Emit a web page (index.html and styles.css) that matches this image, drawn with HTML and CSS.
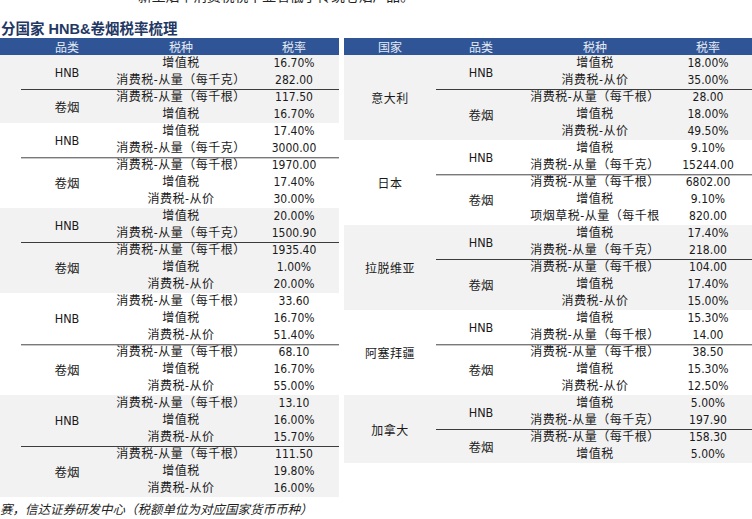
FILE: index.html
```html
<!DOCTYPE html>
<html lang="zh-CN">
<head>
<meta charset="utf-8">
<title>分国家 HNB&amp;卷烟税率梳理</title>
<link rel="stylesheet" href="styles.css">
</head>
<body>
<div class="lead">新型烟草消费税税率显著低于传统卷烟产品。</div>
<h1 class="title">分国家 HNB&amp;卷烟税率梳理</h1>
<div class="tables">
  <section class="tbl tbl-left">
    <div class="thead"><span></span><span>品类</span><span>税种</span><span>税率</span></div>

    <div class="grp shade">
      <div class="country"></div>
      <div class="subs">
        <div class="sub"><div class="cat">HNB</div><div class="rows">
          <div class="row"><span>增值税</span><span>16.70%</span></div>
          <div class="row"><span>消费税-从量（每千克）</span><span>282.00</span></div>
        </div></div>
        <div class="sub"><div class="cat">卷烟</div><div class="rows">
          <div class="row"><span>消费税-从量（每千根）</span><span>117.50</span></div>
          <div class="row"><span>增值税</span><span>16.70%</span></div>
        </div></div>
      </div>
    </div>

    <div class="grp">
      <div class="country"></div>
      <div class="subs">
        <div class="sub"><div class="cat">HNB</div><div class="rows">
          <div class="row"><span>增值税</span><span>17.40%</span></div>
          <div class="row"><span>消费税-从量（每千克）</span><span>3000.00</span></div>
        </div></div>
        <div class="sub"><div class="cat">卷烟</div><div class="rows">
          <div class="row"><span>消费税-从量（每千根）</span><span>1970.00</span></div>
          <div class="row"><span>增值税</span><span>17.40%</span></div>
          <div class="row"><span>消费税-从价</span><span>30.00%</span></div>
        </div></div>
      </div>
    </div>

    <div class="grp shade">
      <div class="country"></div>
      <div class="subs">
        <div class="sub"><div class="cat">HNB</div><div class="rows">
          <div class="row"><span>增值税</span><span>20.00%</span></div>
          <div class="row"><span>消费税-从量（每千克）</span><span>1500.90</span></div>
        </div></div>
        <div class="sub"><div class="cat">卷烟</div><div class="rows">
          <div class="row"><span>消费税-从量（每千根）</span><span>1935.40</span></div>
          <div class="row"><span>增值税</span><span>1.00%</span></div>
          <div class="row"><span>消费税-从价</span><span>20.00%</span></div>
        </div></div>
      </div>
    </div>

    <div class="grp">
      <div class="country"></div>
      <div class="subs">
        <div class="sub"><div class="cat">HNB</div><div class="rows">
          <div class="row"><span>消费税-从量（每千根）</span><span>33.60</span></div>
          <div class="row"><span>增值税</span><span>16.70%</span></div>
          <div class="row"><span>消费税-从价</span><span>51.40%</span></div>
        </div></div>
        <div class="sub"><div class="cat">卷烟</div><div class="rows">
          <div class="row"><span>消费税-从量（每千根）</span><span>68.10</span></div>
          <div class="row"><span>增值税</span><span>16.70%</span></div>
          <div class="row"><span>消费税-从价</span><span>55.00%</span></div>
        </div></div>
      </div>
    </div>

    <div class="grp shade">
      <div class="country"></div>
      <div class="subs">
        <div class="sub"><div class="cat">HNB</div><div class="rows">
          <div class="row"><span>消费税-从量（每千根）</span><span>13.10</span></div>
          <div class="row"><span>增值税</span><span>16.00%</span></div>
          <div class="row"><span>消费税-从价</span><span>15.70%</span></div>
        </div></div>
        <div class="sub"><div class="cat">卷烟</div><div class="rows">
          <div class="row"><span>消费税-从量（每千根）</span><span>111.50</span></div>
          <div class="row"><span>增值税</span><span>19.80%</span></div>
          <div class="row"><span>消费税-从价</span><span>16.00%</span></div>
        </div></div>
      </div>
    </div>
  </section>

  <section class="tbl tbl-right">
    <div class="thead"><span>国家</span><span>品类</span><span>税种</span><span>税率</span></div>

    <div class="grp shade">
      <div class="country">意大利</div>
      <div class="subs">
        <div class="sub"><div class="cat">HNB</div><div class="rows">
          <div class="row"><span>增值税</span><span>18.00%</span></div>
          <div class="row"><span>消费税-从价</span><span>35.00%</span></div>
        </div></div>
        <div class="sub"><div class="cat">卷烟</div><div class="rows">
          <div class="row"><span>消费税-从量（每千根）</span><span>28.00</span></div>
          <div class="row"><span>增值税</span><span>18.00%</span></div>
          <div class="row"><span>消费税-从价</span><span>49.50%</span></div>
        </div></div>
      </div>
    </div>

    <div class="grp">
      <div class="country">日本</div>
      <div class="subs">
        <div class="sub"><div class="cat">HNB</div><div class="rows">
          <div class="row"><span>增值税</span><span>9.10%</span></div>
          <div class="row"><span>消费税-从量（每千克）</span><span>15244.00</span></div>
        </div></div>
        <div class="sub"><div class="cat">卷烟</div><div class="rows">
          <div class="row"><span>消费税-从量（每千根）</span><span>6802.00</span></div>
          <div class="row"><span>增值税</span><span>9.10%</span></div>
          <div class="row"><span>项烟草税-从量（每千根</span><span>820.00</span></div>
        </div></div>
      </div>
    </div>

    <div class="grp shade">
      <div class="country">拉脱维亚</div>
      <div class="subs">
        <div class="sub"><div class="cat">HNB</div><div class="rows">
          <div class="row"><span>增值税</span><span>17.40%</span></div>
          <div class="row"><span>消费税-从量（每千克）</span><span>218.00</span></div>
        </div></div>
        <div class="sub"><div class="cat">卷烟</div><div class="rows">
          <div class="row"><span>消费税-从量（每千根）</span><span>104.00</span></div>
          <div class="row"><span>增值税</span><span>17.40%</span></div>
          <div class="row"><span>消费税-从价</span><span>15.00%</span></div>
        </div></div>
      </div>
    </div>

    <div class="grp">
      <div class="country">阿塞拜疆</div>
      <div class="subs">
        <div class="sub"><div class="cat">HNB</div><div class="rows">
          <div class="row"><span>增值税</span><span>15.30%</span></div>
          <div class="row"><span>消费税-从量（每千根）</span><span>14.00</span></div>
        </div></div>
        <div class="sub"><div class="cat">卷烟</div><div class="rows">
          <div class="row"><span>消费税-从量（每千根）</span><span>38.50</span></div>
          <div class="row"><span>增值税</span><span>15.30%</span></div>
          <div class="row"><span>消费税-从价</span><span>12.50%</span></div>
        </div></div>
      </div>
    </div>

    <div class="grp shade">
      <div class="country">加拿大</div>
      <div class="subs">
        <div class="sub"><div class="cat">HNB</div><div class="rows">
          <div class="row"><span>增值税</span><span>5.00%</span></div>
          <div class="row"><span>消费税-从量（每千克）</span><span>197.90</span></div>
        </div></div>
        <div class="sub"><div class="cat">卷烟</div><div class="rows">
          <div class="row"><span>消费税-从量（每千根）</span><span>158.30</span></div>
          <div class="row"><span>增值税</span><span>5.00%</span></div>
        </div></div>
      </div>
    </div>
  </section>
</div>
<p class="source">赛，信达证券研发中心（税额单位为对应国家货币币种）</p>
</body>
</html>
```

FILE: styles.css
```css
html, body {
  margin: 0;
  padding: 0;
  background: #ffffff;
}
body {
  width: 752px;
  overflow: hidden;
  font-family: "DejaVu Sans Condensed", "Liberation Sans", "Noto Sans CJK SC", sans-serif;
  color: #1a1a1a;
}
.lead {
  margin: -12px 0 0 0;
  padding-left: 138px;
  height: 15px;
  line-height: 15px;
  font-size: 13.8px;
  font-family: "Noto Sans CJK SC", sans-serif;
  color: #222;
  white-space: nowrap;
}
.title {
  margin: 17px 0 0 0;
  padding-left: 1px;
  height: 18px;
  line-height: 18px;
  font-size: 14.5px;
  font-weight: bold;
  color: #1f3864;
  font-family: "Liberation Sans", "Noto Sans CJK SC", sans-serif;
  white-space: nowrap;
}
.tables {
  display: flex;
  gap: 5px;
  align-items: flex-start;
}
.tbl {
  font-size: 12px;
  flex: none;
}
.tbl-left {
  width: 339px;
  --c1: 21px;
  --c2: 92px;
  --c3: 136px;
  --c4: 90px;
}
.tbl-right {
  width: 408px;
  --c1: 92px;
  --c2: 90px;
  --c3: 138px;
  --c4: 88px;
}
.thead {
  display: grid;
  grid-template-columns: var(--c1) var(--c2) var(--c3) var(--c4);
  height: 17px;
  line-height: 17px;
  background: #2f5597;
  color: #e4eaf4;
  text-align: center;
  font-family: "Noto Sans CJK SC", sans-serif;
  font-size: 12px;
}
.grp {
  display: grid;
  grid-template-columns: var(--c1) 1fr;
}
.grp.shade {
  background: #f2f2f2;
}
.country {
  display: flex;
  align-items: center;
  justify-content: center;
  font-family: "Noto Sans CJK SC", sans-serif;
  letter-spacing: 0.5px;
  white-space: nowrap;
}
.sub {
  display: grid;
  grid-template-columns: var(--c2) 1fr;
}
.sub + .sub {
  box-shadow: inset 0 1px 0 #3c3c3c;
}
.grp:not(.shade) .sub + .sub {
  box-shadow: inset 0 1px 0 #7a7a7a, inset 0 2px 0 #c8c8c8;
}
.cat {
  display: flex;
  align-items: center;
  justify-content: center;
  font-size: 12.5px;
}
.row {
  display: grid;
  grid-template-columns: var(--c3) 1fr;
  height: 17px;
  line-height: 17px;
  text-align: center;
  white-space: nowrap;
}
.row span:first-child {
  letter-spacing: 0.5px;
}
.row span:last-child {
  font-size: 12px;
}
.source {
  margin: 3px 0 0 0;
  height: 17px;
  line-height: 17px;
  font-size: 12.5px;
  font-style: italic;
  font-family: "Noto Sans CJK SC", sans-serif;
  color: #222;
  white-space: nowrap;
}
```
